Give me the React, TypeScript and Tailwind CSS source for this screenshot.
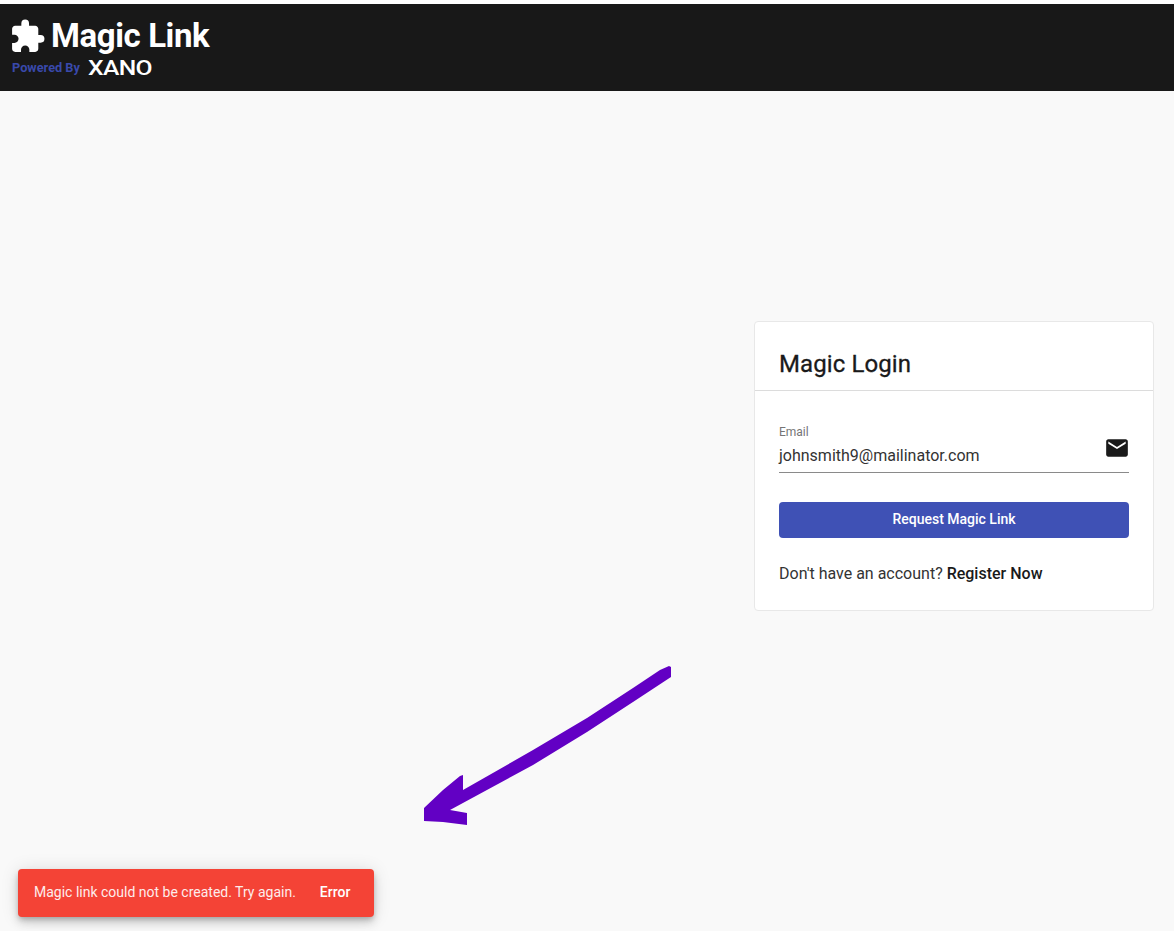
import { MdEmail, MdExtension } from 'react-icons/md';

const font = { fontFamily: 'Roboto, sans-serif' };

export default function App() {
    return (
        <div className="relative h-[931px] overflow-hidden bg-[#f9f9f9] font-['Roboto',sans-serif] text-[#1a1a1a]" style={font}>
            <div className="h-1 bg-white" />

            {/* Header */}
            <header className="h-[87px] bg-[#181818] pl-3 pt-[14px]">
                <div className="flex h-9 items-center">
                    <MdExtension className="ml-[-3px] h-[37px] w-[37px] text-white" />
                    <h1 className="ml-[5px] text-[33px] leading-9 font-bold tracking-[-0.4px] text-white">Magic Link</h1>
                </div>
                <div className="mt-[3px] flex h-[22px] items-center">
                    <span className="text-[12.75px] font-bold text-[#3949ab]">Powered By</span>
                    <span className="ml-[8px] inline-block origin-left scale-x-[1.3] scale-y-[1.06] text-[19px] leading-none font-medium tracking-[-0.5px] text-white">XANO</span>
                </div>
            </header>

            {/* Login card */}
            <main className="flex justify-end pt-[230px] pr-5">
                <section className="h-[290px] w-[400px] rounded border border-[#e8e8e8] bg-white">
                    <div className="h-[69px] border-b border-[#dcdcdc] pt-[26px] pl-6">
                        <h2 className="text-[24px] leading-8 font-normal tracking-[0.1px] [-webkit-text-stroke:0.3px_#1a1a1a]">Magic Login</h2>
                    </div>
                    <div className="px-6 pt-[33px]">
                        <div className="relative h-[49px] border-b border-[#8a8a8a]">
                            <label className="block pt-[1px] text-xs leading-[14px] text-[#757575]">Email</label>
                            <div className="mt-[5px] text-base leading-6 text-[#333]">johnsmith9@mailinator.com</div>
                            <MdEmail className="absolute top-[11px] right-[-1px] h-[26px] w-[26px] text-[#1a1a1a]" />
                        </div>
                        <button className="mt-[29px] flex h-9 w-full items-center justify-center rounded bg-[#3f51b5] pb-[2px] text-sm font-medium text-white">
                            Request Magic Link
                        </button>
                        <p className="mt-[24px] text-base leading-6 text-[#333]">
                            Don't have an account? <span className="font-medium text-[#1a1a1a]">Register Now</span>
                        </p>
                    </div>
                </section>
            </main>

            {/* Hand drawn arrow */}
            <svg className="absolute top-[660px] left-[420px]" width="256" height="170" viewBox="420 660 256 170">
                <path
                    fill="#6200c4"
                    d="M669 666 L671 667 L671 677 L633 702 L587 732 L533 765 L450 810 L467 813 L467 825 L443 822 L424 821 L424 808 L443 790 L460 776 L463 775 L463 790 L533 750 L587 718 L633 688 L660 670 Z"
                />
            </svg>

            {/* Snackbar */}
            <div className="absolute top-[869px] left-[18px] flex h-12 w-[356px] items-center rounded bg-[#f44336] pb-[2px] pl-4 text-sm text-white shadow-[0_3px_5px_-1px_rgba(0,0,0,0.2),0_6px_10px_0_rgba(0,0,0,0.14),0_1px_18px_0_rgba(0,0,0,0.12)]">
                <span className="opacity-90">Magic link could not be created. Try again.</span>
                <span className="ml-[24px] font-medium">Error</span>
            </div>
        </div>
    );
}
